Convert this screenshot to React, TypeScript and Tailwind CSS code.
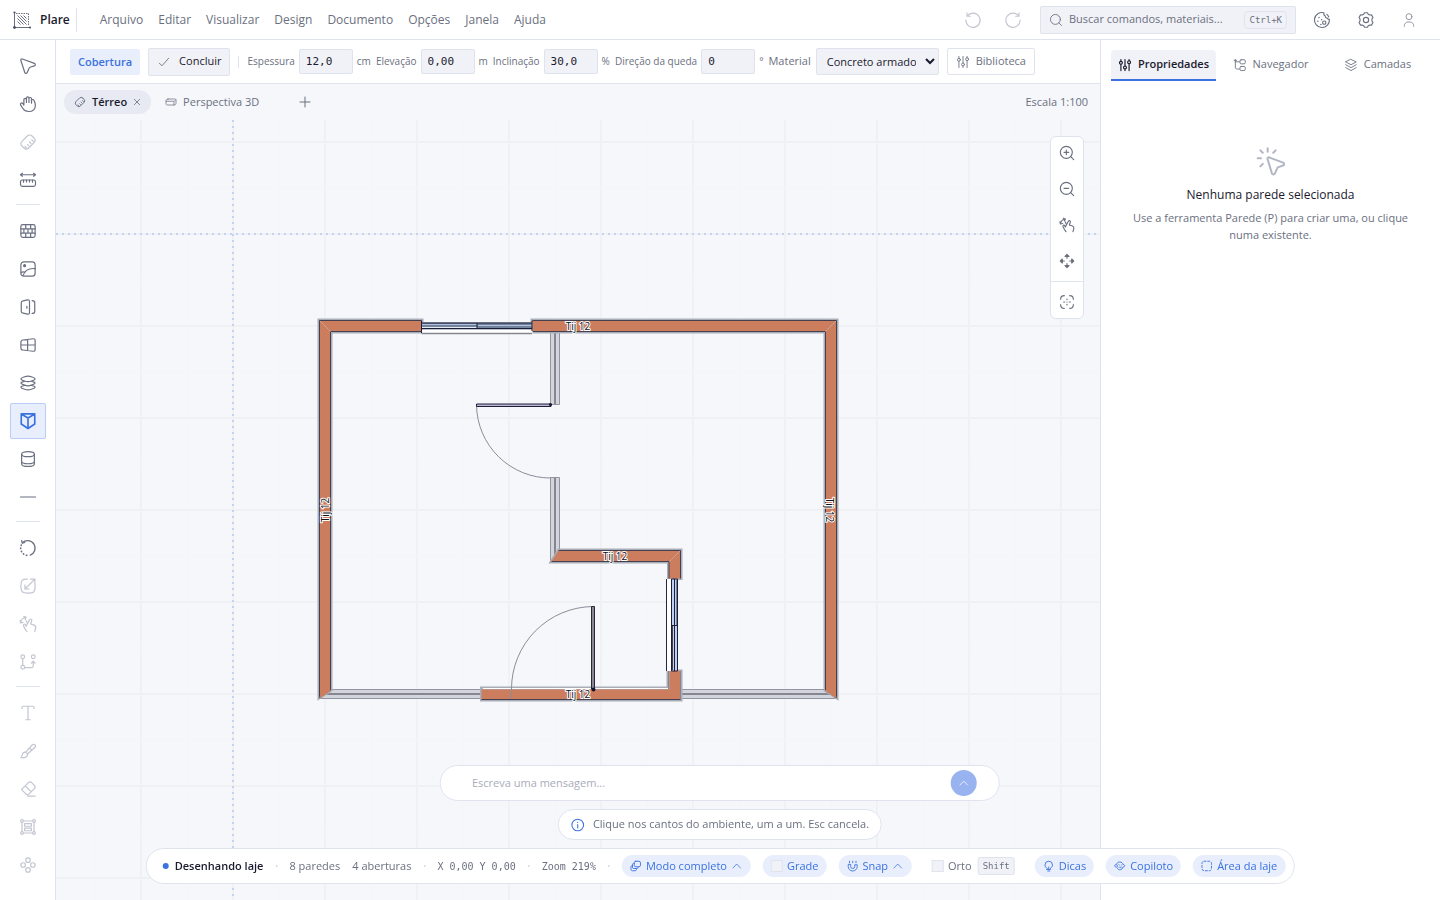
import type { ReactNode } from "react";

const icons: Record<string, ReactNode> = {
  select: <path d="M2.5 4.7c-.5-1.4.7-2.6 2.1-2.1l15.9 5.9c1.700.7 1.600 2.900-.1 3.400l-5.600 1.800c-.6.2-1 .6-1.300 1.200l-2.600 5.900c-.7 1.600-2.700 1.500-3.200-.1z" />,
  hand: <path d="M6.500 12.500V6.200a1.700 1.700 0 0 1 3.400 0V10M9.900 10V4.200a1.700 1.700 0 0 1 3.400 0V10M13.300 10V5a1.700 1.700 0 0 1 3.400 0V11M16.700 10.500V7.500a1.700 1.700 0 0 1 3.300-.3c.8 2 1.800 3.200 1.800 6.300 0 5.200-3.600 8.500-9 8.500-3.600 0-6.100-1.500-7.600-4L2.100 13.200C1.200 11.300 3.500 9.500 5 11.300l1.500 2.200" />,
  measure: <><rect x="5.7" y="2.5" width="12.6" height="19" rx="4.5" transform="rotate(45 12 12)" /><path d="m19 11-2-1.800M16 14l-2-2M13 17l-1.500-1.500M10 20l-2-2" /></>,
  dimension: <><rect x="2" y="12" width="20" height="8.500" rx="2.500" /><path d="M2 5h20M4.500 3 2 5l2.500 2M19.500 3 22 5l-2.500 2M6 12v3M10 12v2.500M14 12v2.500M18 12v3" /></>,
  wall: <><rect x="2.500" y="3.500" width="19" height="17" rx="2.500" /><path d="M2.500 9.200h19M2.500 14.800h19M9 3.500v5.700M15.500 3.500v5.700M6.500 9.200v5.600M12 9.200v5.600M17.500 9.200v5.600M9 14.800v5.700M15.500 14.800v5.700" /></>,
  image: <><rect x="2.500" y="2.500" width="19" height="19" rx="4" /><circle cx="7.500" cy="7.500" r="1.300" fill="currentColor" /><path d="M5.500 20.500C8 14 13 10.500 21.500 11.500M3 16.500c1.800-1 3.600-1 5.400-.3" /></>,
  door: <path d="M3 6.500C3 5 4 4 5.500 3.800l6-1.300C13 2.200 14 3 14 4.500v15c0 1.500-1 2.300-2.500 2l-6-1.300C4 20 3 19 3 17.500zM17.500 3.500c2.500 0 3.500 1 3.500 3v11c0 2-1 3-3.500 3M10.500 11v2.500" />,
  window: <path d="M2.500 8.500c0-2 .8-3 2.700-3.200L19 3.700c1.700-.2 2.500.6 2.500 2.300v12c0 1.700-.8 2.500-2.500 2.300L5.200 18.700c-1.900-.2-2.700-1.200-2.700-3.200zM2.500 12h19M11.500 4.700v14.600" />,
  slab: <path d="M12 2.800c2 0 9.500 2 9.500 3.700s-7.500 3.700-9.500 3.700-9.500-2-9.500-3.700S10 2.800 12 2.800zM7 9.800c-2.800.8-4.500 1.500-4.500 2.200 0 1.700 7.500 3.700 9.500 3.700s9.500-2 9.500-3.700c0-.7-1.700-1.400-4.500-2.200M7 15.300c-2.800.8-4.500 1.500-4.500 2.200 0 1.700 7.500 3.700 9.500 3.700s9.500-2 9.500-3.700c0-.7-1.700-1.400-4.500-2.200" />,
  roof: <path d="M3 2.500h18v13.500l-9 6-9-6zM12 8v14M3.500 3 12 8l8.500-5" />,
  column: <><ellipse cx="12" cy="5.500" rx="8.500" ry="3.300" /><path d="M3.500 5.500v13c0 1.800 3.800 3.300 8.500 3.300s8.500-1.500 8.500-3.300v-13M3.500 15c0 1.800 3.800 3.300 8.500 3.300s8.500-1.500 8.500-3.300" /></>,
  line: <path d="M2 12h20" />,
  rotate: <><path d="M4.500 5A10 10 0 1 1 15 21.500" strokeWidth="1.800" /><path d="M3 8A10 10 0 0 0 14 21.800" strokeWidth="2.200" strokeDasharray=".5 3.800" /><path d="M3.500 2 4.300 5.500l3.400-.8" /></>,
  scale: <path d="M11 2.800C4 2.500 2.500 4.500 2.500 12S4 21.500 12 21.500s9.500-1.500 9.500-9.500V9.500M8 16 20.500 3.500M8 10.500V16h5.500M15.500 2.800h5.700v5.700" />,
  gesture: <><path d="M9.500 15 14 6.500a1.600 1.600 0 0 1 3 1.200L15.500 12l4.700 1.500c1.800.7 2.500 2 2 4L21 22M9.500 15l-1-2c-1-1.500-3-.5-2.500 1.200L8 18.500l2.500 3.500" /><path d="M2 10.500C2.500 7 5 4 9 3M1.500 7 2 10.500 5.500 9.800M6.500 1.800 9.500 3 8.300 6M11 11 9.500 7.500" /></>,
  flow: <><circle cx="5" cy="5" r="2.500" /><circle cx="19" cy="5" r="2.500" /><circle cx="5" cy="19" r="2.500" /><path d="M5 7.500v9M7.500 19.500h9c1.800 0 2.500-1 2.500-2.500v-6M16.500 13.500 19 11l2.500 2.500" /></>,
  text: <path d="M4 6V4.500C4 3.500 4.500 3 5.500 3h13c1 0 1.500.5 1.500 1.500V6M12 3v18M9 21h6" />,
  pencil: <path d="M9 13.500 17.500 4c1-1.200 2.700-1.300 3.700-.3s.9 2.600-.2 3.700L11.500 16M9 13.500c-2.500-.5-4 1-4.500 3.500-.3 1.500-1 2.500-2 3.500 3.500 1.200 9 .5 9-4.500zM9 13.500l2.500 2.500M14 8l3 3" />,
  eraser: <path d="m3.500 12.500 9-9c1.300-1.300 3-1.300 4.300 0l3.700 3.700c1.300 1.300 1.300 3 0 4.300l-7 7c-1.300 1.300-3 1.300-4.300 0l-5.700-5.700zM8.500 8l7.500 7.500M11.500 21.500h10" />,
  frame: <><circle cx="4" cy="4" r="1.800" /><circle cx="20" cy="4" r="1.800" /><circle cx="4" cy="20" r="1.800" /><circle cx="20" cy="20" r="1.800" /><path d="M6 4h12M6 20h12M4 6v12M20 6v12M7.500 7.500h9v3.500h-9zM7.500 13.500h9V17h-9z" /></>,
  nodes: <><circle cx="12" cy="5.500" r="3" /><circle cx="5.500" cy="12" r="3" /><circle cx="18.500" cy="12" r="3" /><circle cx="12" cy="18.500" r="3" /></>,
  undo: <path d="M4.500 6.500A9.500 9.500 0 1 1 2.500 12M4 2.500v4.500h4.500" />,
  redo: <path d="M19.500 6.500A9.500 9.500 0 1 0 21.500 12M20 2.500v4.500h-4.500" />,
  search: <><circle cx="11" cy="11" r="8.500" /><path d="m17 17 4.500 4.500" /></>,
  zoomIn: <><circle cx="11" cy="11" r="9" /><path d="m17.500 17.500 4.500 4.500M7.500 11h7M11 7.500v7" /></>,
  zoomOut: <><circle cx="11" cy="11" r="9" /><path d="m17.500 17.500 4.500 4.500M7.500 11h7" /></>,
  palette: <><path d="M14.500 2.300A10 10 0 1 0 21.900 11c-1.200.3-2.300-.3-2.700-1.500-1.700.1-3-1.200-2.800-2.900-1.300-.4-2.200-2-1.900-4.300zM18.500 4.500A10 10 0 0 1 21 8" /><circle cx="15" cy="15.500" r="2.200" /><path d="M8 8.500h.01M6.500 13.500h.01M11.500 11.500h.01M10.500 18h.01" strokeWidth="2" /></>,
  gear: <><path d="M9 4.300 10 2.300h4l1 2 2 1.100 2.300-.2 2 3.500-1.300 1.800v3l1.300 1.800-2 3.500-2.300-.2-2 1.100-1 2h-4l-1-2-2-1.100-2.300.2-2-3.500L4 13.500v-3L2.700 8.700l2-3.500 2.300.2z" /><circle cx="12" cy="12" r="3.500" /></>,
  user: <><circle cx="12" cy="7" r="4.500" /><path d="M5 21.500v-1c0-3 2.500-5.500 5.500-5.500h3c3 0 5.500 2.500 5.500 5.500v1" /></>,
  sliders: <><path d="M5 2.500v3M5 11v10.500M12 2.500v11M12 19v2.500M19 2.500v2M19 10v11.500" /><circle cx="5" cy="8.200" r="2.500" /><circle cx="12" cy="16.200" r="2.500" /><circle cx="19" cy="7.200" r="2.500" /></>,
  tree: <><path d="M4 2.500v13c0 2.500 1 3.500 3.500 3.500H11M4 6.500h7M2 4h4" /><rect x="12" y="3" width="9" height="7" rx="2" /><rect x="12" y="14.500" width="9" height="7" rx="2" /></>,
  layers: <path d="M12 2.500 21 6.800 12 11.500 3 6.800zM3 11.500l9 5 9-5M3 16.500l9 5 9-5" />,
  check: <path d="m4 14 4.500 4.500L20 5.500" />,
  close: <path d="m4 4 16 16M20 4 4 20" />,
  plus: <path d="M12 2v20M2 12h20" />,
  box: <path d="M6 6h13c2 0 3 1 3 2.500v6c0 1.500-1 3-3 3.500H5c-2 0-3-1-3-2.500V10c0-2 1.500-4 4-4zM2.500 10.500H16c1.500 0 2 .8 2 2V18M18 11l3.500-3.500" />,
  move: <path d="M12 3v5M12 16v5M3 12h5M16 12h5M9 5l3-3 3 3zM9 19l3 3 3-3zM5 9l-3 3 3 3zM19 9l3 3-3 3z" />,
  focus: <path d="M2.500 8c0-4 1.500-5.500 5.500-5.500M16 2.500c4 0 5.500 1.500 5.500 5.500M21.500 16c0 4-1.500 5.500-5.500 5.500M8 21.500c-4 0-5.500-1.500-5.500-5.500M12 7.500v1M12 12v.1M12 15.500v1M7 12h1.500M15.500 12H17" />,
  click: <><path d="M9.500 10.800c-.4-1 .4-1.800 1.400-1.400l10.200 3.800c1.100.5 1 1.900 0 2.200l-3.600 1.200c-.4.100-.7.400-.9.900l-1.700 3.900c-.5 1-1.800.9-2.200-.1z" /><path d="M9.500 2.500V5M4 4l1.800 1.800M2 10h2.500M15.500 4l-1.800 1.800M4 16l1.800-1.800" /></>,
  info: <><circle cx="12" cy="12" r="10" /><path d="M12 11v6M12 7.500v.2" /></>,
  up: <path d="m4.500 16 7.500-8 7.500 8" />,
  mode: <><rect x="9" y="2.500" width="12.500" height="11" rx="3" /><path d="M9 7H7.500C6 7 5.500 8 5.500 9.500v5c0 1.500.8 2.500 2.500 2.500h6.500c1.500 0 2.500-1 2.500-2.500M5.500 11c-2 0-3 1-3 3v4.500c0 2 1 3 3 3h5c2 0 3-1 3-3" /></>,
  magnet: <path d="M3 9.500v3.500a9 9 0 0 0 18 0V9.500h-5V13a4 4 0 0 1-8 0V9.500zM5.500 2.500v3M18.500 2.500v3M12 2.500v3" />,
  bulb: <path d="M8.500 16.500C6 15 4.500 12.500 4.500 10a7.500 7.500 0 0 1 15 0c0 2.500-1.500 5-4 6.500v2.500h-7zM10 22h4M12 19v-5" />,
  copilot: <path d="M5.500 14.500C3.500 14 2 13 2 11.500S3.500 9 5.500 9C6 6 8.500 4 12 4s6 2 6.500 5c2 0 3.500 1 3.500 2.500s-1.500 2.500-3.500 2.500c-.5 3-3 5.500-6.500 5.500-2 0-3.500-1-4.500-2.500M8.500 9.500 6 12l2.500 2.500M12 10v.2M16 10v.2M12 14.500h3" />,
  area: <rect x="2.500" y="2.500" width="19" height="19" rx="4" strokeDasharray="4 3.500" />,
};

const Icon = ({ name, size = "size-[18px]", stroke = 1.5 }: { name: string; size?: string; stroke?: number }) => (
  <svg viewBox="0 0 24 24" className={`${size} shrink-0`} fill="none" stroke="currentColor" strokeWidth={stroke} strokeLinecap="round" strokeLinejoin="round" aria-hidden="true">
    {icons[name]}
  </svg>
);

const menus = ["Arquivo", "Editar", "Visualizar", "Design", "Documento", "Opções", "Janela", "Ajuda"];

const toolGroups = [
  [["select", "Selecionar"], ["hand", "Mover vista"], ["measure", "Medir", "off"], ["dimension", "Cota"]],
  [["wall", "Parede"], ["image", "Imagem"], ["door", "Porta"], ["window", "Janela"], ["slab", "Laje"], ["roof", "Cobertura"], ["column", "Pilar"], ["line", "Viga"]],
  [["rotate", "Girar"], ["scale", "Escalar", "off"], ["gesture", "Mover", "off"], ["flow", "Deslocar", "off"]],
  [["text", "Texto", "off"], ["pencil", "Desenhar", "off"], ["eraser", "Apagar", "off"], ["frame", "Agrupar", "off"], ["nodes", "Matriz", "off"]],
];

const Header = () => (
  <header className="flex h-10 shrink-0 items-center border-b border-[#dfe3ee] bg-white">
    <div className="flex items-center gap-2 pl-3">
      <svg viewBox="0 0 20 20" className="size-5" fill="none" stroke="#6b7080" aria-hidden="true">
        <path d="M2.500 2v15.500H18" />
        <path d="M4 3.500h12.500v12.500" strokeDasharray="1.500 1" />
        <path d="m5.500 5.500 9 9M8.500 5.500l6 6M11.500 5.500l3 3M5.500 8.500l6 6M5.500 11.500l3 3" />
        <circle cx="2.500" cy="2.500" r="1.100" fill="#4b5065" stroke="none" />
        <circle cx="2.500" cy="17.500" r="1.400" fill="#4b5065" stroke="none" />
        <circle cx="18" cy="17.500" r="1.100" fill="#4b5065" stroke="none" />
      </svg>
      <span className="text-xs font-semibold text-[#1a1a2e]">Plare</span>
    </div>
    <div className="ml-1.5 h-6 w-px bg-[#dfe3ee]" />
    <nav className="ml-[23px] flex gap-[15px]">
      {menus.map((m) => (
        <button key={m} type="button" className="text-xs">{m}</button>
      ))}
    </nav>
    <div className="ml-auto flex items-center">
      <div className="flex gap-[22px] text-[#c3c6d1]">
        <button type="button" aria-label="Desfazer"><Icon name="undo" /></button>
        <button type="button" aria-label="Refazer"><Icon name="redo" /></button>
      </div>
      <button type="button" className="ml-[18px] flex h-7 w-64 items-center rounded-xs border border-[#dfe3ee] bg-[#f1f2f7] px-2">
        <Icon name="search" size="size-3.5" />
        <span className="ml-1.5 text-[11px]">Buscar comandos, materiais...</span>
        <kbd className="ml-auto rounded border border-[#dfe3ee] px-1 py-px font-['DejaVu_Sans_Mono',monospace] text-[9px] leading-[14px]">Ctrl+K</kbd>
      </button>
      <div className="mr-[23px] ml-[17px] flex items-center gap-[26px]">
        <button type="button" aria-label="Tema"><Icon name="palette" /></button>
        <button type="button" aria-label="Configurações"><Icon name="gear" /></button>
        <button type="button" aria-label="Conta" className="opacity-70"><Icon name="user" size="size-4" /></button>
      </div>
    </div>
  </header>
);

const Toolbar = () => (
  <aside className="flex w-14 shrink-0 flex-col items-center border-r border-[#dfe3ee] bg-white pt-2">
    {toolGroups.map((group, i) => (
      <div key={i} className="flex flex-col items-center gap-0.5">
        {i > 0 && <div className="my-1.5 h-px w-6 bg-[#dfe3ee]" />}
        {group.map(([name, label, state]) => (
          <button
            key={name}
            type="button"
            aria-label={label}
            disabled={state === "off"}
            className={
              name === "roof"
                ? "flex size-9 items-center justify-center rounded-xs border border-[#b9cdf6] bg-[#e8eefb] text-[#3b72e0]"
                : state === "off"
                  ? "flex size-9 items-center justify-center text-[#c3c6d1]"
                  : "flex size-9 items-center justify-center"
            }
          >
            <Icon name={name} stroke={name === "roof" ? 2.2 : 1.6} />
          </button>
        ))}
      </div>
    ))}
  </aside>
);

const Field = ({ id, label, value, unit }: { id: string; label: string; value: string; unit: string }) => (
  <div className="flex items-center gap-1 text-[10px]">
    <label htmlFor={id} className="whitespace-nowrap">{label}</label>
    <input id={id} defaultValue={value} className="h-[25px] w-[54px] rounded-xs border border-[#dfe3ee] bg-[#f1f2f7] px-1.5 font-['DejaVu_Sans_Mono',monospace] text-[11px] text-[#1a1a2e]" />
    <span>{unit}</span>
  </div>
);

const OptionsBar = () => (
  <div className="flex h-11 shrink-0 items-center gap-2 border-b border-[#dfe3ee] bg-white pl-3.5">
    <span className="rounded-xs bg-[#e8eefb] px-2 py-1 text-[11px] leading-[18px] font-semibold text-[#3b72e0]">Cobertura</span>
    <button type="button" className="flex h-7 items-center gap-2 rounded-xs border border-[#dfe3ee] bg-[#f1f2f7] px-2 text-[11px] text-[#1a1a2e]">
      <span className="text-[#6b7080]"><Icon name="check" size="size-3.5" /></span>
      Concluir
    </button>
    <div className="h-3 w-px bg-[#dfe3ee]" />
    <div className="flex items-center gap-[5px]">
      <Field id="espessura" label="Espessura" value="12,0" unit="cm" />
      <Field id="elevacao" label="Elevação" value="0,00" unit="m" />
      <Field id="inclinacao" label="Inclinação" value="30,0" unit="%" />
      <Field id="queda" label="Direção da queda" value="0" unit="°" />
      <label htmlFor="material" className="text-[11px]">Material</label>
      <select id="material" className="h-[27px] w-[123px] rounded-xs border border-[#dfe3ee] bg-[#f1f2f7] px-1.5 text-[11px] text-[#1a1a2e]">
        <option>Concreto armado</option>
      </select>
    </div>
    <button type="button" className="flex h-[27px] items-center gap-1.5 rounded-xs border border-[#dfe3ee] px-2 text-[11px]">
      <Icon name="sliders" size="size-3.5" />
      Biblioteca
    </button>
  </div>
);

const ViewTabs = () => (
  <div className="flex h-9 shrink-0 items-center pr-3 pl-2 text-[11px]">
    <div className="flex h-6 items-center rounded-full bg-[#e7eaf2] px-2.5">
      <Icon name="measure" size="size-3" stroke={1.8} />
      <button type="button" className="ml-1.5 font-semibold text-[#1a1a2e]">Térreo</button>
      <button type="button" aria-label="Fechar Térreo" className="ml-1.5"><Icon name="close" size="size-2" stroke={2.5} /></button>
    </div>
    <button type="button" className="ml-3.5 flex items-center gap-1.5">
      <Icon name="box" size="size-3" />
      Perspectiva 3D
    </button>
    <button type="button" aria-label="Nova vista" className="ml-10"><Icon name="plus" size="size-3" stroke={2} /></button>
    <span className="ml-auto">Escala 1:100</span>
  </div>
);

const majorX = [141, 233, 325, 417, 509, 601, 693, 785, 877, 969, 1061];
const majorY = [142, 234, 326, 418, 510, 602, 694, 786, 878];

const wallLabels = [
  { x: 578, y: 326, turn: 0 },
  { x: 578, y: 694, turn: 0 },
  { x: 615, y: 556, turn: 0 },
  { x: 325, y: 510, turn: -90 },
  { x: 830, y: 510, turn: 90 },
];

const FloorPlan = () => (
  <svg viewBox="56 120 1044 780" preserveAspectRatio="xMinYMin slice" className="absolute inset-0 h-full w-full" fill="none">
    {majorX.map((x) => (
      <g key={x}>
        <path d={`M${x} 120V900`} stroke="#eff1f5" strokeWidth="2" />
        <path d={`M${x - 46} 120V900`} stroke="#f3f5f9" />
      </g>
    ))}
    {majorY.map((y) => (
      <g key={y}>
        <path d={`M56 ${y}H1100`} stroke="#eff1f5" strokeWidth="2" />
        <path d={`M56 ${y + 46}H1100`} stroke="#f3f5f9" />
      </g>
    ))}
    <path d="M233 120V900M56 234H1100" stroke="#c3d2f5" strokeWidth="2" strokeDasharray="2 4" />

    {/* drywall */}
    <g fill="#d3d5dc" stroke="#9295a1">
      <path d="M320 689.5H482V698.5H320zM680 689.5H837V698.5H680zM550.5 332V404.5H559.5V332zM550.5 477.5V562H559.5V477.5z" />
      <path d="M326 694H482M680 694H831M555 332V404M555 478V556" stroke="#85868f" strokeWidth="2" />
    </g>

    {/* brick walls: soft outer outline, then the dark edge and the fill */}
    <g stroke="#a9adb8" strokeWidth="4">
      <path d="M319.5 697V320.5H421.5V331.5H330.5V690z" />
      <path d="M532.5 320.5H836.5V697L825.5 690V331.5H532.5z" />
      <path d="M552 561.5 559 550.5H680.5V578H669V561.5z" />
      <path d="M482 699.5V688.5H668.5V671.5H680.5V699.5z" />
    </g>
    <path d="M483 688.5H668" stroke="#fff" />
    <g fill="#cc7d5e">
      <path d="M319.5 697.5V320.5H421.5V331.5H330.5V690z" stroke="#45404f" />
      <path d="M532.5 320.5H836.5V697.5L825.5 690V331.5H532.5z" stroke="#45404f" />
      <path d="M551.5 561.5 558.5 550.5H680.5V578.5H669V561.5z" />
      <path d="M481.5 699.5V689.5H669.5V671H680.5V699.5z" />
    </g>
    <path d="M558.5 550.5H680.5V578.5M669 578.5V561.5H551.5M481.5 699.5H680.5" stroke="#45404f" />
    <path d="M668.5 689V671M680.5 699V671" stroke="#85868f" />
    <path d="m320 697 10-7M836 697l-10-7M421 321V331M533 321V331" stroke="#cc7d5e" strokeWidth="2" />
    <path d="m320 321 11 11M836 321l-11 11M680 551l-11 11" stroke="#c5b3aa" strokeDasharray="2 1" />

    {/* top window */}
    <path d="M421.5 322H532.5V334H421.5z" fill="#fff" />
    <path d="M421.5 333.5H532" stroke="#85868f" strokeWidth="1.5" />
    <path d="M421.5 322.5H532.5V329.5H421.5z" fill="#73839a" />
    <path d="M422 324.5H477M478 325.5H532" stroke="#aebfe4" />
    <path d="M422 327.5H477" stroke="#e4ebf7" />
    <path d="M421.5 323H532M421.5 328.5H532M477 323V328M532 321V331M421.5 321V333" stroke="#1c1f38" />

    {/* side window */}
    <path d="M667 579H672V671H667z" fill="#fff" />
    <path d="M666.5 579V671" stroke="#25254a" />
    <path d="M672 579H678V671H672z" fill="#bfd0f2" />
    <path d="M676.5 580V625" stroke="#73839a" />
    <path d="M671.5 579H677.5V671H671.5zM674.5 579V671M672 625.5H678" stroke="#1c1f38" />
    <path d="M672.5 626V670" stroke="#4c4146" />

    {/* doors */}
    <path d="M476.5 405A74 74 0 0 0 551 478M511.5 699V689A82.5 82.5 0 0 1 593 606.5" stroke="#8b8d99" />
    <path d="M476.5 404H551V406.5H476.5z" fill="#b9b9d2" stroke="#1f1f3a" />
    <path d="M591.5 606.5H594.5V689H591.5z" fill="#8a8597" stroke="#2b2836" />
    <circle cx="550.5" cy="404.5" r="1.5" fill="#15152a" />
    <circle cx="593.5" cy="689.5" r="2" fill="#15152a" />

    {wallLabels.map(({ x, y, turn }) => (
      <text key={`${x}-${y}`} transform={`rotate(${turn} ${x} ${y})`} x={x} y={y + 4} textAnchor="middle" fontSize="10" fontWeight="500" fill="#10101f" stroke="#fff" strokeWidth="2" strokeLinejoin="round" paintOrder="stroke">
        Tij 12
      </text>
    ))}
  </svg>
);

const ZoomTools = () => (
  <div className="absolute top-4 right-4 flex w-[34px] flex-col items-center gap-1 rounded-md border border-[#dfe3ee] bg-white">
    {[["zoomIn", "Aproximar"], ["zoomOut", "Afastar"], ["gesture", "Gestos"], ["move", "Mover"]].map(([name, label]) => (
      <button key={name} type="button" aria-label={label} className="flex size-8 items-center justify-center"><Icon name={name} size="size-4" stroke={1.7} /></button>
    ))}
    <div className="h-px w-full bg-[#dfe3ee]" />
    <button type="button" aria-label="Enquadrar" className="flex size-8 items-center justify-center"><Icon name="focus" size="size-4" stroke={1.7} /></button>
  </div>
);

const SidePanel = () => (
  <aside className="w-[340px] shrink-0 border-l border-[#dfe3ee] bg-white px-2.5 pt-2.5">
    <div role="tablist" className="grid grid-cols-3 gap-0.5 text-[11px] font-medium">
      <button type="button" role="tab" aria-selected="true" className="flex h-[31px] items-center justify-center gap-1.5 rounded-t border-b-2 border-[#3b72e0] bg-[#f1f2f7] font-semibold text-[#1a1a2e]">
        <Icon name="sliders" size="size-3.5" stroke={2} />
        Propriedades
      </button>
      <button type="button" role="tab" aria-selected="false" className="flex h-[31px] items-center justify-center gap-1.5 border-b-2 border-transparent">
        <Icon name="tree" size="size-3.5" />
        Navegador
      </button>
      <button type="button" role="tab" aria-selected="false" className="flex h-[31px] items-center justify-center gap-1.5 border-b-2 border-transparent">
        <Icon name="layers" size="size-3.5" />
        Camadas
      </button>
    </div>
    <div className="flex flex-col items-center px-5 pt-16 text-center">
      <span className="text-[#b3b6c4]"><Icon name="click" size="size-8" /></span>
      <h2 className="mt-2 text-xs leading-5 font-medium text-[#1a1a2e]">Nenhuma parede selecionada</h2>
      <p className="mt-1 text-[11px] leading-[17px]">Use a ferramenta Parede (P) para criar uma, ou clique numa existente.</p>
    </div>
  </aside>
);

const Dot = () => <span className="size-0.5 rounded-full bg-[#d5d8e2]" />;

const pill = "flex h-[22px] items-center gap-1 rounded-full bg-[#e8eefb] px-2 font-medium text-[#3b72e0]";
const box = "size-3 appearance-none border border-[#dfe3ee] bg-[#f1f2f7]";

const BottomStack = () => (
  <div className="fixed bottom-4 left-1/2 flex -translate-x-1/2 flex-col items-center gap-2 whitespace-nowrap">
    <form className="flex h-9 w-[560px] items-center rounded-full border border-[#dfe3ee] bg-white pr-[22px] pl-[31px]">
      <input aria-label="Mensagem" placeholder="Escreva uma mensagem..." className="flex-1 text-[11px] outline-none placeholder:text-[#a9acba]" />
      <button type="button" aria-label="Enviar" className="flex size-[26px] items-center justify-center rounded-full bg-[#98b3f0] text-white"><Icon name="up" size="size-3" /></button>
    </form>
    <div className="flex h-[31px] items-center gap-2 rounded-full border border-[#dfe3ee] bg-white px-3 text-[11px]">
      <span className="text-[#3b72e0]"><Icon name="info" size="size-3.5" stroke={1.8} /></span>
      Clique nos cantos do ambiente, um a um. Esc cancela.
    </div>
    <div className="flex h-9 items-center gap-3 rounded-full border border-[#dfe3ee] bg-white pr-2 pl-4 text-[11px]">
      <span className="flex items-center gap-1.5 font-semibold text-[#1a1a2e]">
        <span className="size-1.5 rounded-full bg-[#3b72e0]" />
        Desenhando laje
      </span>
      <Dot />
      <span>8 paredes</span>
      <span>4 aberturas</span>
      <Dot />
      <span className="font-['DejaVu_Sans_Mono',monospace] text-[10px]">X 0,00 Y 0,00</span>
      <Dot />
      <span className="font-['DejaVu_Sans_Mono',monospace] text-[10px]">Zoom 219%</span>
      <Dot />
      <button type="button" className={pill}>
        <Icon name="mode" size="size-3" stroke={1.8} />
        Modo completo
        <Icon name="up" size="size-3" />
      </button>
      <label className={pill}>
        <input type="checkbox" className={box} />
        Grade
      </label>
      <button type="button" className={pill}>
        <Icon name="magnet" size="size-3" stroke={1.8} />
        Snap
        <Icon name="up" size="size-3" />
      </button>
      <label className="ml-2 flex items-center gap-1">
        <input type="checkbox" className={box} />
        Orto
        <kbd className="ml-0.5 rounded-xs border border-[#dfe3ee] bg-[#f1f2f7] px-1 font-['DejaVu_Sans_Mono',monospace] text-[9px] leading-4">Shift</kbd>
      </label>
      <button type="button" className={`${pill} ml-2`}>
        <Icon name="bulb" size="size-3" stroke={1.8} />
        Dicas
      </button>
      <button type="button" className={pill}>
        <Icon name="copilot" size="size-3" stroke={1.8} />
        Copiloto
      </button>
      <button type="button" className={pill}>
        <Icon name="area" size="size-3" stroke={1.8} />
        Área da laje
      </button>
    </div>
  </div>
);

export default function App() {
  return (
    <div className="flex h-screen flex-col overflow-hidden bg-[#f5f7fb] font-['Open_Sans',sans-serif] text-[#6b7080]">
      <Header />
      <div className="flex min-h-0 flex-1">
        <Toolbar />
        <main className="flex min-w-0 flex-1 flex-col">
          <OptionsBar />
          <ViewTabs />
          <div className="relative min-h-0 flex-1 overflow-hidden">
            <FloorPlan />
            <ZoomTools />
          </div>
        </main>
        <SidePanel />
      </div>
      <BottomStack />
    </div>
  );
}
